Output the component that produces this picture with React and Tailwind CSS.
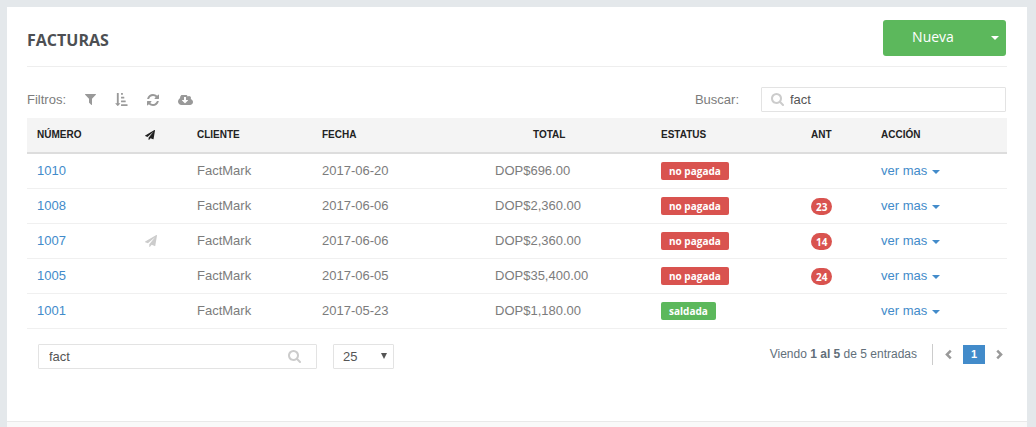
import React, { useState } from 'react';

const INVOICES = [
    { number: '1010', sent: false, client: 'FactMark', date: '2017-06-20', total: 'DOP$696.00', paid: false, age: null },
    { number: '1008', sent: false, client: 'FactMark', date: '2017-06-06', total: 'DOP$2,360.00', paid: false, age: 23 },
    { number: '1007', sent: true, client: 'FactMark', date: '2017-06-06', total: 'DOP$2,360.00', paid: false, age: 14 },
    { number: '1005', sent: false, client: 'FactMark', date: '2017-06-05', total: 'DOP$35,400.00', paid: false, age: 24 },
    { number: '1001', sent: false, client: 'FactMark', date: '2017-05-23', total: 'DOP$1,180.00', paid: true, age: null },
];

const ICONS = {
    filter: {
        box: '192 256 1408 1408',
        d: 'M1595 295q17 41-14 70l-493 493v742q0 42-39 59-13 5-25 5-27 0-45-19l-256-256q-19-19-19-45v-486l-493-493q-31-29-14-70 17-39 59-39h1280q42 0 59 39z',
    },
    sort: {
        box: '0 0 1792 1792',
        d: 'M736 1440q0 12-10 24l-319 320q-10 8-23 8-12 0-23-9l-320-320q-15-16-7-35 8-20 30-20h192v-1376q0-14 9-23t23-9h192q14 0 23 9t9 23v1376h192q14 0 23 9t9 23zM864 0h192q32 0 32 32v192q0 32-32 32h-192q-32 0-32-32v-192q0-32 32-32zM864 512h384q32 0 32 32v192q0 32-32 32h-384q-32 0-32-32v-192q0-32 32-32zM864 1024h576q32 0 32 32v192q0 32-32 32h-576q-32 0-32-32v-192q0-32 32-32zM864 1536h832q32 0 32 32v192q0 32-32 32h-832q-32 0-32-32v-192q0-32 32-32z',
    },
    refresh: {
        box: '128 128 1536 1536',
        d: 'M1639 1056q0 5-1 7-64 268-268 434.5t-478 166.5q-146 0-282.5-55t-243.5-157l-129 129q-19 19-45 19t-45-19-19-45v-448q0-26 19-45t45-19h448q26 0 45 19t19 45-19 45l-137 137q71 66 161 102t187 36q134 0 250-65t186-179q11-17 53-117 8-23 30-23h192q13 0 22.5 9.5t9.5 22.5zm25-800v448q0 26-19 45t-45 19h-448q-26 0-45-19t-19-45 19-45l138-138q-148-137-349-137-134 0-250 65t-186 179q-11 17-53 117-8 23-30 23h-199q-13 0-22.5-9.5t-9.5-22.5v-7q65-268 270-434.5t480-166.5q146 0 284 55.5t245 156.5l130-129q19-19 45-19t45 19 19 45z',
    },
    download: {
        box: '-64 256 1920 1280',
        d: 'M1216 928q0-14-9-23t-23-9h-224v-352q0-13-9.5-22.5t-22.5-9.5h-192q-13 0-22.5 9.5t-9.5 22.5v352h-224q-13 0-22.5 9.5t-9.5 22.5q0 14 9 23l352 352q9 9 23 9t23-9l351-351q10-12 10-24zm640 224q0 159-112.5 271.5t-271.5 112.5h-1088q-185 0-316.5-131.5t-131.5-316.5q0-130 70-240t188-165q-2-30-2-43 0-212 150-362t362-150q156 0 285.5 87t188.5 231q71-62 166-62 106 0 181 75t75 181q0 76-41 138 130 31 213.5 135.5t83.5 238.5z',
    },
    plane: {
        box: '0 0 1792 1792',
        d: 'M1764 11q33 24 27 64l-256 1536q-5 29-32 45-14 8-31 8-11 0-24-5l-453-185-242 295q-18 23-49 23-13 0-22-4-19-7-30.5-23.5t-11.5-36.5v-349l864-1059-1069 925-395-162q-37-14-40-55-2-40 32-59l1664-960q15-9 32-9 20 0 36 11z',
    },
    search: {
        box: '64 128 1664 1664',
        d: 'M1216 832q0-185-131.5-316.5t-316.5-131.5-316.5 131.5-131.5 316.5 131.5 316.5 316.5 131.5 316.5-131.5 131.5-316.5zm512 832q0 52-38 90t-90 38q-54 0-90-38l-343-342q-179 124-399 124-143 0-273.5-55.5t-225-150-150-225-55.5-273.5 55.5-273.5 150-225 225-150 273.5-55.5 273.5 55.5 225 150 150 225 55.5 273.5q0 220-124 399l343 343q37 37 37 90z',
    },
    caret: { box: '0 0 8 4', d: 'M0 0h8l-4 4z' },
    arrow: { box: '0 0 6 6', d: 'M0 0h6l-3 6z' },
    left: { box: '0 0 8 12', d: 'M5.6 0.6L7.6 2.6 4.2 6l3.4 3.4-2 2L0.2 6z' },
    right: { box: '0 0 8 12', d: 'M2.4 0.6L0.4 2.6 3.8 6 0.4 9.4l2 2L7.8 6z' },
};

const Icon = ({ name, className }) => (
    <svg viewBox={ICONS[name].box} className={`shrink-0 fill-current ${className}`} aria-hidden="true">
        <path d={ICONS[name].d} />
    </svg>
);

const Header = () => (
    <header className="flex h-[47px] items-start justify-between border-b border-[#eeeeee]">
        <h1 className="pt-2 font-['Open_Sans',sans-serif] text-base leading-6 font-bold text-[#4d4f53]">FACTURAS</h1>
        <div className="mr-px flex h-9 overflow-hidden rounded-[3px] bg-[#5cb85c] font-['Open_Sans',sans-serif] text-sm text-white">
            <button type="button" className="w-[100px] pb-[2px]">Nueva</button>
            <button type="button" aria-label="Más opciones" className="flex w-[23px] items-center justify-center">
                <Icon name="caret" className="h-1 w-2" />
            </button>
        </div>
    </header>
);

const Toolbar = ({ query, onQuery }) => (
    <div className="mt-5 mr-px flex h-[25px] items-center justify-between">
        <div className="flex items-center text-[#999999]">
            <span className="mr-[19px] text-[#7c7c7c]">Filtros:</span>
            <div className="flex items-center gap-[19px]">
                <button type="button" aria-label="Filtrar"><Icon name="filter" className="h-[11px] w-[11px]" /></button>
                <button type="button" aria-label="Ordenar"><Icon name="sort" className="h-[13px] w-[13px]" /></button>
                <button type="button" aria-label="Refrescar"><Icon name="refresh" className="h-3 w-3" /></button>
                <button type="button" aria-label="Descargar"><Icon name="download" className="h-[10px] w-[15px]" /></button>
            </div>
        </div>
        <div className="flex items-center">
            <label htmlFor="buscar" className="mr-[22px] text-[#7c7c7c]">Buscar:</label>
            <div className="flex h-[25px] w-[245px] items-center gap-[6px] rounded-[1px] border border-[#e3e3e3] pl-[9px]">
                <Icon name="search" className="h-[13px] w-[13px] text-[#cccccc]" />
                <input
                    id="buscar"
                    type="text"
                    value={query}
                    onChange={(e) => onQuery(e.target.value)}
                    className="w-full min-w-0 text-[#555555] outline-none"
                />
            </div>
        </div>
    </div>
);

const InvoiceTable = ({ rows }) => (
    <table className="mt-[6px] w-full table-fixed border-separate border-spacing-0 text-left">
        <colgroup>
            <col className="w-[108px]" />
            <col className="w-[52px]" />
            <col className="w-[125px]" />
            <col className="w-[173px]" />
            <col className="w-[166px]" />
            <col className="w-[150px]" />
            <col className="w-[70px]" />
            <col />
        </colgroup>
        <thead>
            <tr className="h-9 bg-[#f4f4f4] text-[10px] text-[#222222] [&>th]:border-b-2 [&>th]:border-[#dddddd] [&>th]:px-[10px] [&>th]:font-bold">
                <th>NÚMERO</th>
                <th aria-label="Enviada"><Icon name="plane" className="h-[10px] w-[10px]" /></th>
                <th>CLIENTE</th>
                <th>FECHA</th>
                <th><span className="pl-[38px]">TOTAL</span></th>
                <th>ESTATUS</th>
                <th>ANT</th>
                <th>ACCIÓN</th>
            </tr>
        </thead>
        <tbody>
            {rows.map((row) => (
                <tr key={row.number} className="h-[35px] [&>td]:border-b [&>td]:border-[#f0f0f0] [&>td]:px-[10px]">
                    <td><a href="#" className="text-[#428bca]">{row.number}</a></td>
                    <td>{row.sent && <Icon name="plane" className="h-3 w-3 text-[#cccccc]" />}</td>
                    <td>{row.client}</td>
                    <td>{row.date}</td>
                    <td>{row.total}</td>
                    <td>
                        <span className={`flex h-[18px] w-fit items-center rounded-[2px] px-2 font-['Open_Sans',sans-serif] text-[10px] font-bold text-white ${row.paid ? 'bg-[#5cb85c]' : 'bg-[#d9534f]'}`}>
                            {row.paid ? 'saldada' : 'no pagada'}
                        </span>
                    </td>
                    <td>
                        {row.age && (
                            <span className="mt-px flex h-[17px] w-fit items-center rounded-full bg-[#d9534f] px-[5px] font-['Open_Sans',sans-serif] text-[10px] font-bold text-white">
                                {row.age}
                            </span>
                        )}
                    </td>
                    <td>
                        <button type="button" className="flex items-center gap-[5px] text-[#428bca]">
                            ver mas
                            <Icon name="caret" className="mt-[2px] h-1 w-2" />
                        </button>
                    </td>
                </tr>
            ))}
        </tbody>
    </table>
);

const Pager = ({ query, onQuery }) => (
    <div className="mt-[15px] flex items-start justify-between pl-[11px]">
        <div className="flex gap-4 text-[#555555]">
            <div className="flex h-[25px] w-[279px] items-center rounded-[1px] border border-[#e3e3e3] pr-[15px] pl-[10px]">
                <input
                    type="text"
                    aria-label="Buscar factura"
                    value={query}
                    onChange={(e) => onQuery(e.target.value)}
                    className="w-full min-w-0 outline-none"
                />
                <Icon name="search" className="h-[13px] w-[13px] text-[#cccccc]" />
            </div>
            <div className="relative">
                <select aria-label="Entradas por página" defaultValue="25" className="h-[25px] w-[61px] appearance-none rounded-[1px] border border-[#e3e3e3] pl-[9px] outline-none">
                    <option>10</option>
                    <option>25</option>
                    <option>50</option>
                </select>
                <Icon name="arrow" className="pointer-events-none absolute top-[9px] right-[7px] h-[6px] w-[6px]" />
            </div>
        </div>
        <div className="flex items-center text-xs text-[#626f7a]">
            <p className="pb-[2px]">Viendo <b>1</b> <b>al</b> <b>5</b> de 5 entradas</p>
            <div className="ml-[15px] flex h-[21px] items-center border-l border-[#cccccc] pr-1 pl-3 text-[#999999]">
                <button type="button" aria-label="Anterior"><Icon name="left" className="h-[11px] w-[7px]" /></button>
                <button type="button" className="mx-[11px] h-[19px] w-[22px] bg-[#428bca] text-[11px] font-bold text-white">1</button>
                <button type="button" aria-label="Siguiente"><Icon name="right" className="h-[11px] w-[7px]" /></button>
            </div>
        </div>
    </div>
);

const App = () => {
    const [query, setQuery] = useState('fact');
    const rows = INVOICES.filter((row) => row.client.toLowerCase().includes(query.toLowerCase()));

    return (
        <div className="flex min-h-screen flex-col bg-[#e4e8eb] pt-[7px] pr-[9px] pl-[7px] font-['Liberation_Sans',Arial,sans-serif] text-[13px] leading-4 text-[#7c7c7c]">
            <main className="flex grow flex-col bg-white">
                <div className="grow px-5 pt-[13px] pb-12">
                    <Header />
                    <Toolbar query={query} onQuery={setQuery} />
                    <InvoiceTable rows={rows} />
                    <Pager query={query} onQuery={setQuery} />
                </div>
                <footer className="h-[6px] border-t border-[#e9e9e9] bg-[#f9f9f9]" />
            </main>
        </div>
    );
};

export default App;
